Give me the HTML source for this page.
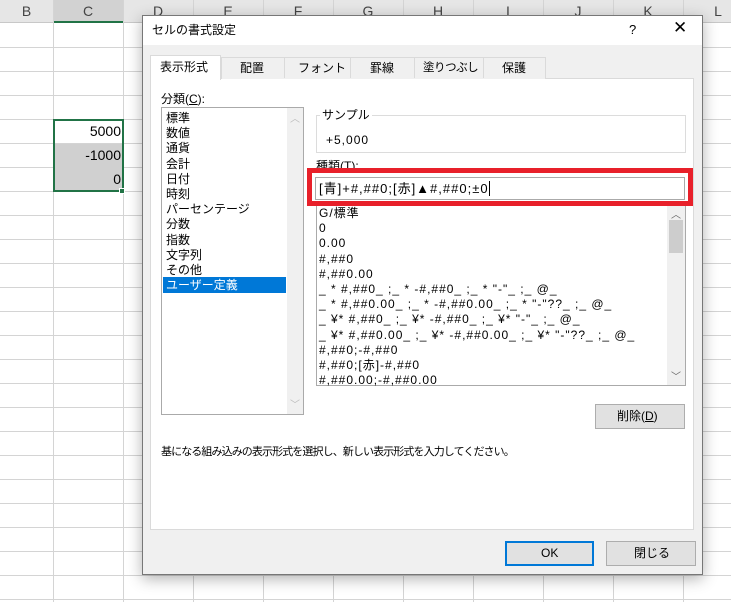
<!DOCTYPE html>
<html><head><meta charset="utf-8"><style>
*{margin:0;padding:0;box-sizing:border-box}
body{width:731px;height:602px;overflow:hidden;background:#fff;font-family:"Liberation Sans","Noto Sans CJK JP",sans-serif;position:relative}
.a{position:absolute}
.t{font-size:12px;color:#000;white-space:nowrap;line-height:15px}
.hl{position:absolute;left:0;width:731px;height:1px;background:#d4d4d4}
.vl{position:absolute;top:0;width:1px;height:602px;background:#d4d4d4}
.ch{position:absolute;top:0;height:23px;font-size:14px;color:#444;text-align:center;line-height:23px}
</style></head><body>
<div class="a" style="left:0;top:0;width:731px;height:23px;background:#e6e6e6;border-bottom:1px solid #c8c8c8"></div>
<div class="a" style="left:53px;top:0;width:70px;height:23px;background:#d2d2d2;border-bottom:2px solid #217346"></div>
<div class="hl" style="top:47px"></div><div class="hl" style="top:71px"></div><div class="hl" style="top:95px"></div><div class="hl" style="top:119px"></div><div class="hl" style="top:143px"></div><div class="hl" style="top:167px"></div><div class="hl" style="top:191px"></div><div class="hl" style="top:215px"></div><div class="hl" style="top:239px"></div><div class="hl" style="top:263px"></div><div class="hl" style="top:287px"></div><div class="hl" style="top:311px"></div><div class="hl" style="top:335px"></div><div class="hl" style="top:359px"></div><div class="hl" style="top:383px"></div><div class="hl" style="top:407px"></div><div class="hl" style="top:431px"></div><div class="hl" style="top:455px"></div><div class="hl" style="top:479px"></div><div class="hl" style="top:503px"></div><div class="hl" style="top:527px"></div><div class="hl" style="top:551px"></div><div class="hl" style="top:575px"></div><div class="hl" style="top:599px"></div>
<div class="vl" style="left:53px"></div><div class="vl" style="left:123px"></div><div class="vl" style="left:193px"></div><div class="vl" style="left:263px"></div><div class="vl" style="left:333px"></div><div class="vl" style="left:403px"></div><div class="vl" style="left:473px"></div><div class="vl" style="left:543px"></div><div class="vl" style="left:613px"></div><div class="vl" style="left:683px"></div>
<div class="ch" style="left:0;width:53px">B</div><div class="ch" style="left:53px;width:70px">C</div><div class="ch" style="left:123px;width:70px">D</div><div class="ch" style="left:193px;width:70px">E</div><div class="ch" style="left:263px;width:70px">F</div><div class="ch" style="left:333px;width:70px">G</div><div class="ch" style="left:403px;width:70px">H</div><div class="ch" style="left:473px;width:70px">I</div><div class="ch" style="left:543px;width:70px">J</div><div class="ch" style="left:613px;width:70px">K</div><div class="ch" style="left:683px;width:70px">L</div>
<div class="a" style="left:54px;top:144px;width:69px;height:47px;background:#d0d0d0"></div>
<div class="a" style="left:53px;top:119px;width:71px;height:73px;border:2px solid #217346"></div>
<div class="a" style="left:119px;top:188px;width:6px;height:6px;background:#217346;border:1px solid #fff"></div>
<div class="a t" style="left:55px;top:123px;width:66px;text-align:right;font-size:14px;line-height:16px">5000</div>
<div class="a t" style="left:55px;top:147px;width:66px;text-align:right;font-size:14px;line-height:16px">-1000</div>
<div class="a t" style="left:55px;top:171px;width:66px;text-align:right;font-size:14px;line-height:16px">0</div>

<div class="a" style="left:142px;top:15px;width:561px;height:560px;background:#f0f0f0;border:1px solid #777;box-shadow:0 4px 14px rgba(0,0,0,.3)"></div>
<div class="a" style="left:143px;top:16px;width:559px;height:29px;background:#fff"></div>
<div class="a t" style="left:152px;top:23px">セルの書式設定</div>
<div class="a t" style="left:629px;top:22px;font-size:13px">?</div>
<div class="a t" style="left:673px;top:20px;font-size:17px">✕</div>

<div class="a" style="left:150px;top:78px;width:544px;height:452px;background:#fff;border:1px solid #dadada"></div>
<div class="a" style="left:221px;top:57px;width:325px;height:22px;background:#f0f0f0;border:1px solid #dadada;border-bottom:none"></div>
<div class="a" style="left:284px;top:57px;width:1px;height:21px;background:#dadada"></div>
<div class="a" style="left:350px;top:57px;width:1px;height:21px;background:#dadada"></div>
<div class="a" style="left:414px;top:57px;width:1px;height:21px;background:#dadada"></div>
<div class="a" style="left:483px;top:57px;width:1px;height:21px;background:#dadada"></div>
<div class="a" style="left:150px;top:55px;width:71px;height:25px;background:#fff;border:1px solid #dadada;border-bottom:none"></div>
<div class="a t" style="left:160px;top:60px">表示形式</div>
<div class="a t" style="left:240px;top:61px">配置</div>
<div class="a t" style="left:298px;top:61px">フォント</div>
<div class="a t" style="left:370px;top:61px">罫線</div>
<div class="a t" style="left:423px;top:61px;font-size:11.5px;letter-spacing:-0.5px">塗りつぶし</div>
<div class="a t" style="left:502px;top:61px">保護</div>

<div class="a t" style="left:161px;top:92px">分類(<u>C</u>):</div>
<div class="a" style="left:161px;top:107px;width:143px;height:308px;border:1px solid #aaa;background:#fff"></div>
<div class="a" style="left:287px;top:108px;width:16px;height:306px;background:#f0f0f0"></div>
<div class="a t" style="left:290px;top:112px;color:#bbb;font-size:10px">︿</div>
<div class="a t" style="left:290px;top:398px;color:#bbb;font-size:10px">﹀</div>
<div class="a" style="left:163px;top:277px;width:123px;height:16px;background:#0078d7"></div>
<div class="a t" style="left:166px;top:111px;line-height:15.2px">標準<br>数値<br>通貨<br>会計<br>日付<br>時刻<br>パーセンテージ<br>分数<br>指数<br>文字列<br>その他<br><span style="color:#fff">ユーザー定義</span></div>

<div class="a" style="left:316px;top:115px;width:370px;height:38px;border:1px solid #dcdcdc"></div>
<div class="a t" style="left:320px;top:108px;background:#fff;padding:0 2px">サンプル</div>
<div class="a t" style="left:326px;top:133px;letter-spacing:1px">+5,000</div>
<div class="a t" style="left:316px;top:159px">種類(<u>T</u>):</div>
<div class="a" style="left:316px;top:205px;width:370px;height:181px;border:1px solid #aaa;background:#fff"></div>
<div class="a" style="left:667px;top:206px;width:18px;height:179px;background:#f0f0f0"></div>
<div class="a" style="left:669px;top:220px;width:14px;height:33px;background:#cdcdcd"></div>
<div class="a t" style="left:671px;top:208px;color:#666;font-size:10px">︿</div>
<div class="a t" style="left:671px;top:370px;color:#666;font-size:10px">﹀</div>
<div class="a t" style="left:319px;top:206px;line-height:15.2px;letter-spacing:1px">G/標準<br>0<br>0.00<br>#,##0<br>#,##0.00<br>_ * #,##0_ ;_ * -#,##0_ ;_ * "-"_ ;_ @_<br>_ * #,##0.00_ ;_ * -#,##0.00_ ;_ * "-"??_ ;_ @_<br>_ ¥* #,##0_ ;_ ¥* -#,##0_ ;_ ¥* "-"_ ;_ @_<br>_ ¥* #,##0.00_ ;_ ¥* -#,##0.00_ ;_ ¥* "-"??_ ;_ @_<br>#,##0;-#,##0<br>#,##0;[赤]-#,##0<br>#,##0.00;-#,##0.00</div>
<div class="a" style="left:307px;top:168px;width:386px;height:38px;border:5px solid #e8202a;background:#fff"></div>
<div class="a" style="left:315px;top:177px;width:370px;height:23px;border:1px solid #aaa"></div>
<div class="a t" style="left:319px;top:181px;font-size:13px;letter-spacing:1px">[青]+#,##0;[赤]▲#,##0;±0<span style="border-left:1px solid #000;margin-left:0"></span></div>

<div class="a" style="left:595px;top:404px;width:90px;height:25px;background:#e1e1e1;border:1px solid #adadad"></div>
<div class="a t" style="left:617px;top:409px">削除(<u>D</u>)</div>
<div class="a t" style="left:161px;top:445px;font-size:11px;letter-spacing:-0.9px">基になる組み込みの表示形式を選択し、新しい表示形式を入力してください。</div>
<div class="a" style="left:505px;top:541px;width:89px;height:25px;background:#e1e1e1;border:1px solid #0078d7;box-shadow:inset 0 0 0 1px #0078d7"></div>
<div class="a t" style="left:541px;top:546px">OK</div>
<div class="a" style="left:606px;top:541px;width:90px;height:25px;background:#e1e1e1;border:1px solid #adadad"></div>
<div class="a t" style="left:634px;top:546px">閉じる</div>
</body></html>
